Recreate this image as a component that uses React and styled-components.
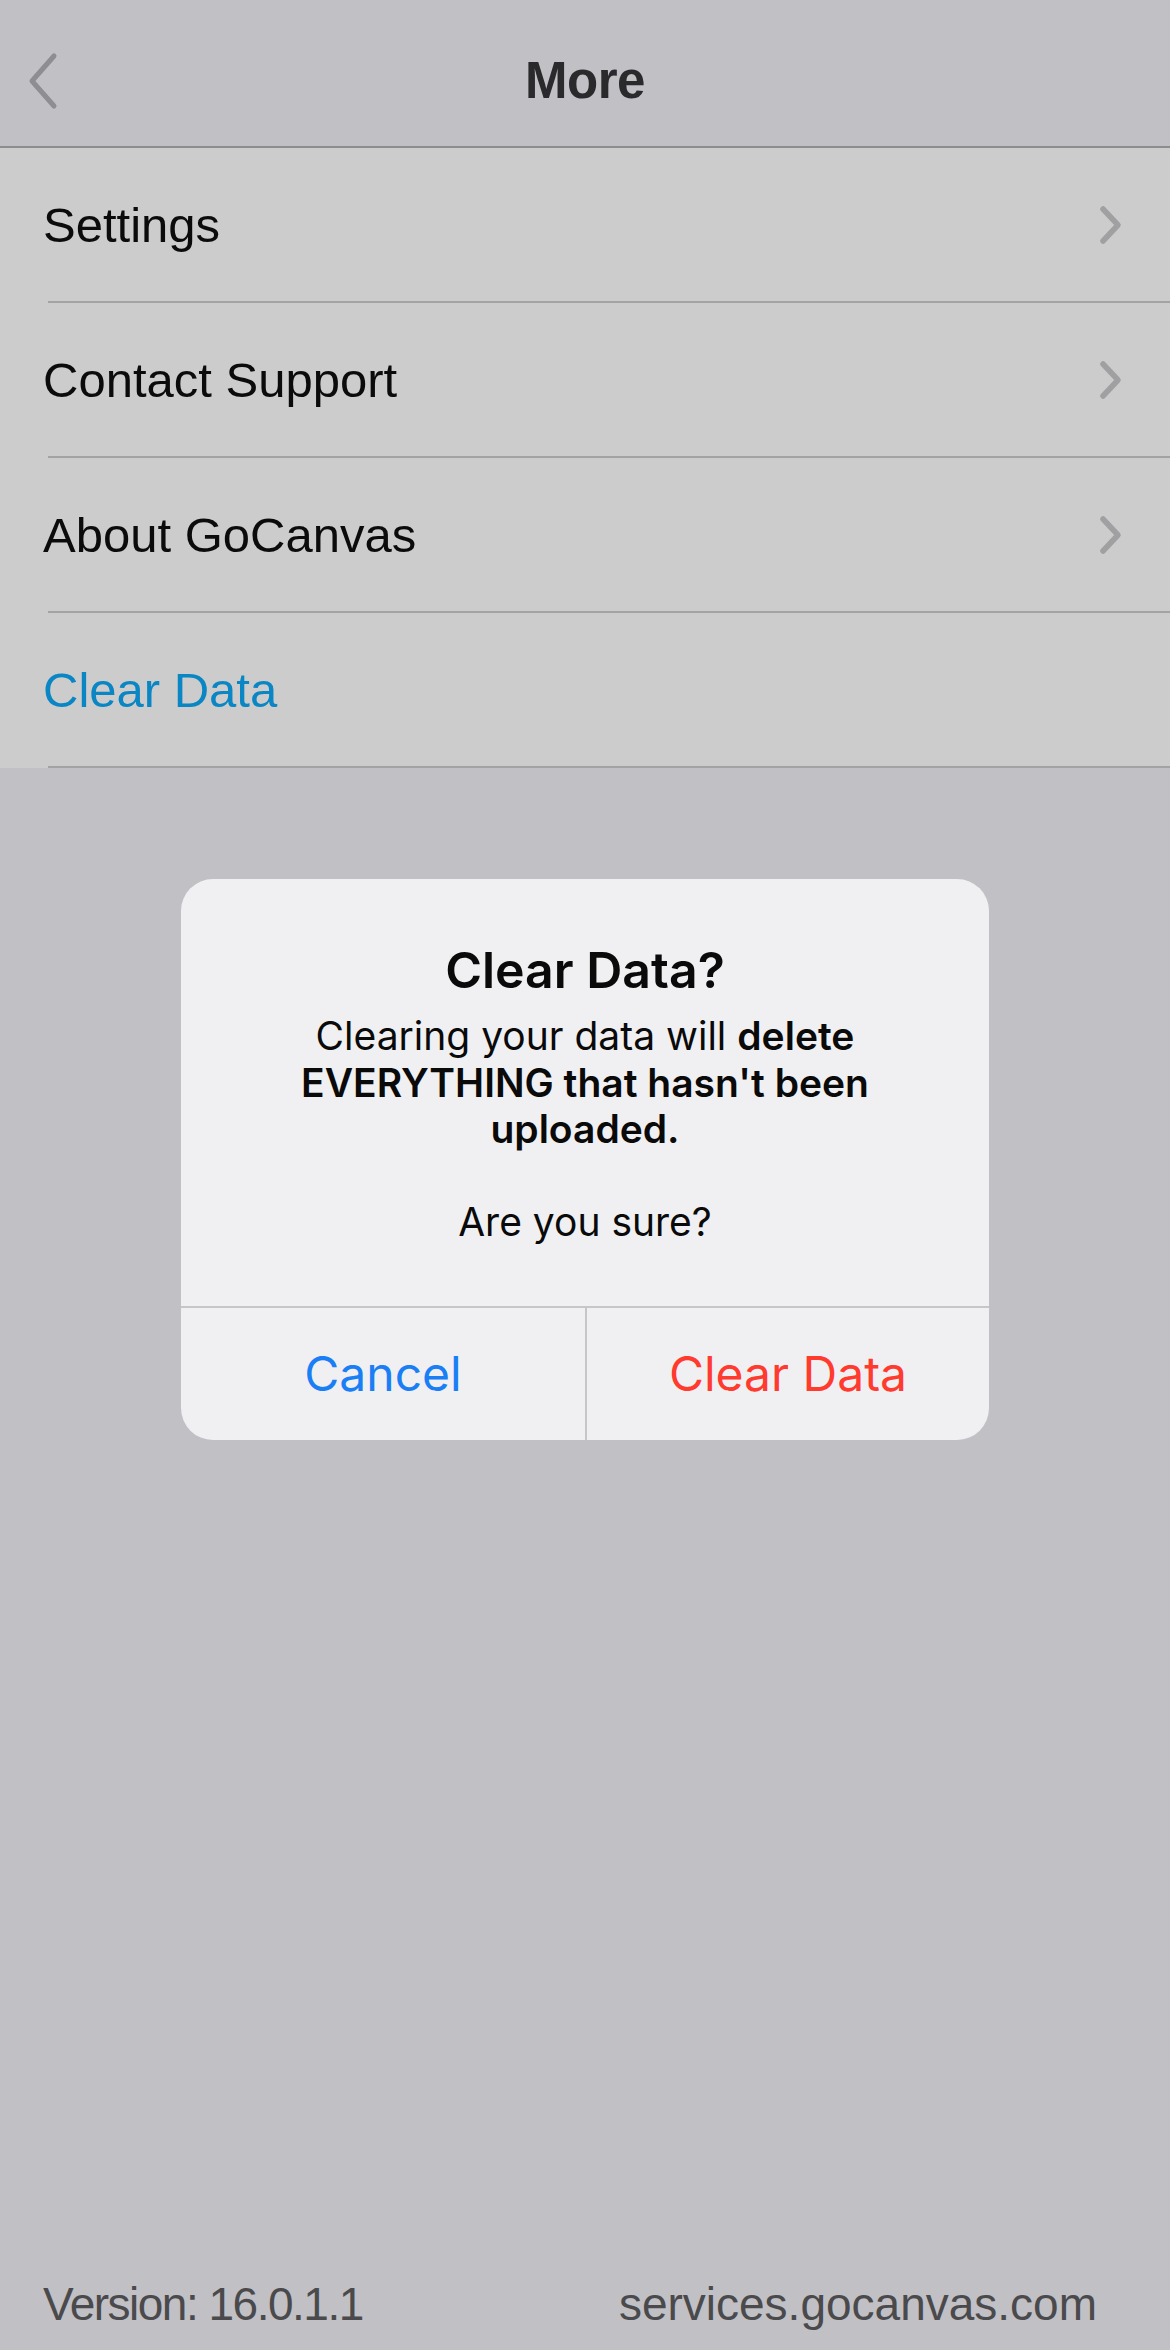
import styled, { createGlobalStyle } from "styled-components";

const GlobalStyle = createGlobalStyle`
  html, body {
    margin: 0;
    padding: 0;
    background: #c1c0c5;
  }
  * {
    box-sizing: border-box;
  }
`;

const items = [
  { label: "Settings", chevron: true },
  { label: "Contact Support", chevron: true },
  { label: "About GoCanvas", chevron: true },
  { label: "Clear Data", accent: true },
];

const Chevron = ({ dir = "right" }) =>
  dir === "left" ? (
    <svg width="40" height="60" viewBox="0 0 40 60" fill="none">
      <path
        d="M32 6 L10 31 L32 56"
        stroke="#8e8e92"
        strokeWidth="5"
        strokeLinecap="round"
        strokeLinejoin="round"
      />
    </svg>
  ) : (
    <svg width="24" height="40" viewBox="0 0 24 40" fill="none">
      <path
        d="M4 4 L19 20 L4 36"
        stroke="#a0a0a2"
        strokeWidth="5.5"
        strokeLinecap="round"
        strokeLinejoin="round"
      />
    </svg>
  );

const App = () => {
  return (
    <Screen>
      <GlobalStyle />
      <NavBar>
        <BackButton>
          <Chevron dir="left" />
        </BackButton>
        <NavTitle>More</NavTitle>
      </NavBar>
      <List>
        {items.map((item) => (
          <Row key={item.label}>
            <RowLabel $accent={item.accent}>{item.label}</RowLabel>
            {item.chevron && <Chevron />}
          </Row>
        ))}
      </List>
      <Filler />
      <Footer>
        <FooterText $tight>Version: 16.0.1.1</FooterText>
        <FooterText>services.gocanvas.com</FooterText>
      </Footer>

      <Alert>
        <AlertBody>
          <AlertTitle>Clear Data?</AlertTitle>
          <AlertMessage>
            Clearing your data will <b>delete</b>
            <br />
            <b>EVERYTHING that hasn't been</b>
            <br />
            <b>uploaded.</b>
            <br />
            <br />
            Are you sure?
          </AlertMessage>
        </AlertBody>
        <AlertActions>
          <ActionButton>Cancel</ActionButton>
          <ActionButton $destructive>Clear Data</ActionButton>
        </AlertActions>
      </Alert>
    </Screen>
  );
};

export default App;

const Screen = styled.div`
  position: relative;
  width: 1170px;
  min-height: 2350px;
  display: flex;
  flex-direction: column;
  background: #c1c0c5;
  font-family: "Liberation Sans", Arial, sans-serif;
`;

const NavBar = styled.header`
  position: relative;
  height: 148px;
  padding-top: 14px;
  display: flex;
  align-items: center;
  justify-content: center;
  border-bottom: 2px solid #8d8d90;
`;

const BackButton = styled.div`
  position: absolute;
  left: 22px;
  top: 50px;
  display: flex;
`;

const NavTitle = styled.h1`
  margin: 0;
  font-size: 51px;
  font-weight: 700;
  color: #2a2a2c;
  letter-spacing: -0.5px;
`;

const List = styled.ul`
  margin: 0;
  padding: 0;
  list-style: none;
  background: #cccccc;
`;

const Row = styled.li`
  height: 155px;
  margin-left: 48px;
  padding-right: 47px;
  display: flex;
  align-items: center;
  justify-content: space-between;
  border-bottom: 2px solid #a3a3a5;
`;

const RowLabel = styled.span`
  margin-left: -5px;
  font-size: 49px;
  color: ${(p) => (p.$accent ? "#0a86c4" : "#0b0b0b")};
`;

const Filler = styled.div`
  flex: 1;
`;

const Footer = styled.footer`
  display: flex;
  justify-content: space-between;
  align-items: center;
  padding: 0 73px 0 43px;
  height: 92px;
`;

const FooterText = styled.span`
  font-size: 46px;
  color: #4a4a4c;
  letter-spacing: ${(p) => (p.$tight ? "-1.5px" : "0")};
`;

const Alert = styled.div`
  position: absolute;
  top: 879px;
  left: 181px;
  width: 808px;
  border-radius: 32px;
  background: #f0f0f2;
  overflow: hidden;
  font-family: Inter, "Liberation Sans", sans-serif;
  color: #0a0a0a;
`;

const AlertBody = styled.div`
  padding: 60px 36px 60px;
  text-align: center;
`;

const AlertTitle = styled.h2`
  margin: 0 0 12px;
  font-size: 50px;
  font-weight: 600;
  line-height: 62px;
`;

const AlertMessage = styled.p`
  margin: 0;
  font-size: 39px;
  line-height: 46.5px;
  font-weight: 400;

  b {
    font-weight: 600;
  }
`;

const AlertActions = styled.div`
  display: grid;
  grid-template-columns: 1fr 1fr;
  border-top: 2px solid #c6c6c9;
`;

const ActionButton = styled.button`
  height: 132px;
  border: none;
  background: transparent;
  font-family: Inter, "Liberation Sans", sans-serif;
  font-size: 48px;
  font-weight: 400;
  color: ${(p) => (p.$destructive ? "#ff3b30" : "#1a7ef5")};
  & + & {
    border-left: 2px solid #c6c6c9;
  }
`;
